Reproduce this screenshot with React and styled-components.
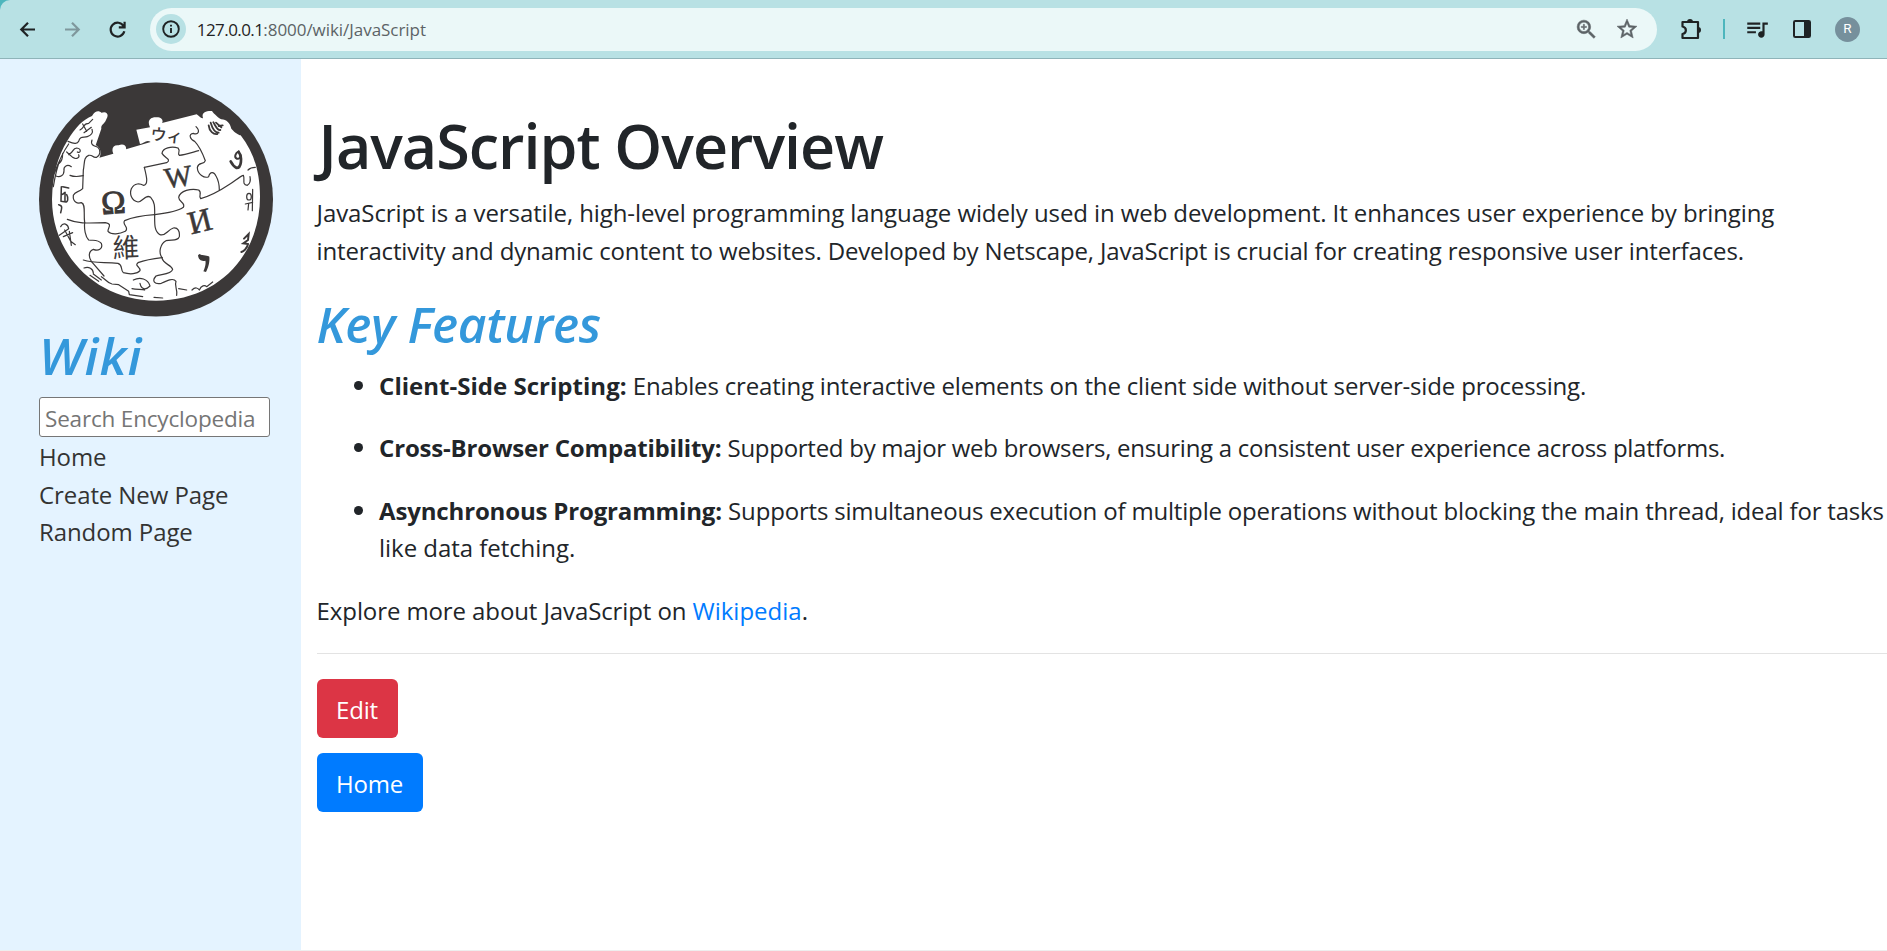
import React from "react";
import styled, { createGlobalStyle } from "styled-components";
import { MdZoomIn, MdStarBorder, MdQueueMusic } from "react-icons/md";

const GlobalStyle = createGlobalStyle`
  *, *::before, *::after { box-sizing: border-box; }
  body {
    margin: 0;
    background: #fff;
    color: #212529;
    font-family: "Open Sans", "Noto Sans", "Liberation Sans", sans-serif;
    font-size: 24px;
    line-height: 37.5px;
    overflow: hidden;
  }
`;

const Page = styled.div`
  display: flex;
  flex-direction: column;
  height: 100vh;
  border-bottom: 1px solid #eeeeee;
`;

/* ---------- browser toolbar ---------- */

const ToolbarFrame = styled.div`
  flex: none;
  background: #4db6bd;
`;

const Toolbar = styled.header`
  display: flex;
  align-items: center;
  height: 59px;
  padding: 0 27px 0 17px;
  background: #b8e1e4;
  border-bottom: 1px solid #8fb4b9;
  border-top-left-radius: 10px;
`;

const NavButtons = styled.div`
  display: flex;
  gap: 24px;
  width: 133px;
`;

const NavIcon = styled.svg`
  display: block;
  width: 21px;
  height: 21px;
  fill: none;
  stroke: ${(p) => (p.$muted ? "#7f979c" : "#1f2324")};
  stroke-width: 2.2;
`;

const AddressBar = styled.div`
  display: flex;
  align-items: center;
  width: 1509px;
  height: 43px;
  padding: 0 18.5px 0 6px;
  border-radius: 22px;
  background: #ebf8f8;
  color: #5c6366;
`;

const SiteInfo = styled.span`
  display: flex;
  align-items: center;
  justify-content: center;
  width: 30px;
  height: 30px;
  margin-right: 11px;
  border-radius: 50%;
  background: #b8e1e4;
`;

const Url = styled.span`
  flex: 1;
  padding-top: 1px;
  font-size: 17px;
  line-height: 24px;
  letter-spacing: -0.05px;
  white-space: nowrap;
`;

const UrlHost = styled.span`
  color: #1f2324;
  letter-spacing: -0.58px;
`;

const AddressActions = styled.span`
  display: flex;
  align-items: center;
  gap: 15.5px;
  path:not([fill="none"]) { stroke: #5c6366; stroke-width: 0.5px; }
`;

const Actions = styled.div`
  display: flex;
  align-items: center;
  margin-left: 22.5px;
`;

const Divider = styled.span`
  width: 2px;
  height: 20px;
  margin: 0 19.5px 0 20px;
  background: #4db6bd;
`;

const PanelIcon = styled.svg`
  display: block;
  margin: 0 24px 0 23px;
`;

const Avatar = styled.span`
  display: flex;
  align-items: center;
  justify-content: center;
  width: 25px;
  height: 25px;
  border-radius: 50%;
  background: #76909c;
  color: #fff;
  font: 13.5px/1 Roboto, sans-serif;
`;

/* ---------- page ---------- */

const Columns = styled.div`
  display: flex;
  flex: 1;
  min-height: 0;
`;

const Sidebar = styled.aside`
  flex: none;
  width: 301px;
  padding: 23px 0 0 39px;
  background: #e4f3ff;
`;

const Logo = styled.svg`
  display: block;
  width: 234px;
  height: 235px;
`;

const Heading = styled.h2`
  margin: 0 0 12.5px;
  color: #3498db;
  font-size: 49.5px;
  font-style: italic;
  font-weight: 600;
  line-height: 60px;
  letter-spacing: ${(p) => p.$tracking || 0}px;
`;

const SidebarHeading = styled(Heading)`
  padding: 8px 0 0 0;
  margin-bottom: 12px;
  font-size: 51px;
`;

const Search = styled.input`
  display: block;
  width: 231px;
  height: 40px;
  padding: 3px 0 0 5px;
  border: 1px solid #767676;
  border-radius: 3px;
  background: #fff;
  font: inherit;
  font-size: 22.5px;
  letter-spacing: -0.18px;
  &::placeholder { color: #757575; opacity: 1; }
`;

const SideNav = styled.nav`
  display: flex;
  flex-direction: column;
  padding-top: 1px;
`;

const SideLink = styled.a`
  color: #333;
  text-decoration: none;
  letter-spacing: -0.09px;
`;

const Content = styled.main`
  flex: 1;
  padding: 48.5px 0 0 15.6px;
`;

const Title = styled.h1`
  margin: 0 0 11.5px;
  padding-left: 2px;
  font-size: 61px;
  font-weight: 600;
  line-height: 75px;
  letter-spacing: -1px;
`;

const Paragraph = styled.p`
  margin: 0 0 ${(p) => (p.$last ? 23.5 : 25)}px;
`;

const FeatureList = styled.ul`
  margin: 0;
  padding: 0 0 0 62.5px;
`;

const Feature = styled.li`
  margin-bottom: 25px;
  &::marker { font-size: 25px; }
`;

const Text = styled.span`
  letter-spacing: ${(p) => p.$tracking}px;
`;

const Strong = styled.strong`
  font-weight: 700;
  letter-spacing: ${(p) => p.$tracking}px;
`;

const Link = styled.a`
  color: #007bff;
  text-decoration: none;
`;

const Rule = styled.hr`
  margin: 0 0 25px;
  border: 0;
  border-top: 1px solid #e3e3e3;
`;

const ButtonStack = styled.div`
  display: flex;
  flex-direction: column;
  align-items: flex-start;
  gap: 15px;
`;

const Button = styled.button`
  height: 59px;
  padding: 12.5px 20px 9px 19.5px;
  border: 0;
  border-radius: 6px;
  background: ${(p) => (p.$danger ? "#dc3545" : "#007bff")};
  color: #fff;
  font: inherit;
  letter-spacing: -0.2px;
`;

function WikiLogo() {
  return (
    <Logo viewBox="27 36 702 705">
      <circle cx="378" cy="388.5" r="351" fill="#3b3838" />
      <path
        fill="#fff"
        d="M208 263 L250 251 C243 236 250 224 266 226 C278 219 291 226 288 238 L362 216 C350 206 340 222 330 222 L319 179 L360 172 C350 152 362 140 380 142 C398 142 400 154 396 159 L500 133 C508 138 514 148 519 144 C514 130 524 122 546 123 C552 132 566 144 574 148 C590 148 600 160 604 176 C616 190 626 194 632 196 C668 242 690 300 690 380 C690 560 560 692 378 692 C200 692 66 556 66 388 C68 310 84 258 112 212 C136 172 160 148 186 138 C196 120 208 122 214 128 C232 122 238 134 228 150 C222 164 212 164 214 176 L197 226 C214 232 214 254 208 263 Z"
      />
      <g fill="none" stroke="#3b3838" strokeWidth="3.6" strokeLinecap="round" strokeLinejoin="round">
        <path d="M114 214 C130 220 142 224 146 214 C150 196 162 204 172 200 C184 196 190 188 186 178" />
        <path d="M186 210 C180 226 194 228 204 232 C214 242 210 256 200 262 C186 264 190 254 176 256 C160 262 164 282 160 300 L158 356 C146 368 136 362 130 376 C128 396 142 402 154 398 C168 402 160 430 164 458" />
        <path d="M78 318 C90 324 102 316 102 302 C100 288 112 282 124 290 M120 316 C132 321 146 320 160 317" />
        <path d="M112 448 C150 464 190 458 226 458 C250 462 232 474 234 484 C244 496 270 492 286 484 C300 472 274 464 284 452 C310 440 344 436 374 434" />
        <path d="M164 458 C162 476 166 500 176 510 C194 512 204 508 214 520 C220 538 204 544 190 538 C174 544 176 562 184 574 L222 618" />
        <path d="M160 570 C190 580 220 576 264 580 C280 586 270 598 280 608 C300 614 322 612 330 602 C332 590 312 588 324 578 C346 570 370 566 396 563" />
        <path d="M396 563 C384 546 392 520 408 512 C426 508 444 514 448 500 C450 484 444 472 430 474 C412 480 406 500 390 494 C372 484 374 460 374 434 C374 414 376 398 362 382 C346 372 340 394 324 396 C304 392 298 372 304 356 C314 338 330 340 340 346 C356 344 350 320 343 292" />
        <path d="M343 292 L410 278 C426 268 404 264 396 250 C398 234 424 228 444 234 C454 246 440 248 448 256 C466 254 490 246 506 242" />
        <path d="M498 170 C512 184 504 196 490 190 C474 192 480 208 494 214 C506 226 520 256 526 272 C522 286 506 274 502 292 C502 314 524 326 536 320 C540 304 552 304 558 318 C566 332 568 344 568 360" />
        <path d="M374 434 C410 430 444 424 460 412 C468 398 446 396 446 382 C450 362 484 354 506 360 C518 370 504 376 512 386 C540 378 570 362 600 342 C614 334 628 320 640 316 C646 328 634 344 652 346 C662 340 662 330 660 320" />
        <path d="M654 300 C660 294 668 292 676 292" />
        <path d="M396 563 C398 582 424 584 428 598 C424 614 390 612 378 618 C364 634 374 644 394 640 C410 632 430 622 438 634 C432 648 444 660 440 676 M446 656 L470 660" />
        <path d="M214 620 C228 628 232 640 246 642 L266 644 L296 664 L298 674 L338 680 M372 682 L398 684" />
        <path d="M162 594 C176 588 190 596 190 610 M180 616 L206 634 M190 612 L214 630" />
        <path d="M310 630 C330 620 354 626 360 648 C346 662 334 658 330 640 M306 656 C320 660 336 656 344 660" />
        <path d="M486 660 C496 650 504 654 508 660 C514 646 524 644 530 650 L548 636" />
        <path d="M150 180 C164 174 158 160 176 160 L188 148 M162 188 L184 172 M158 162 L170 184" />
        <path d="M110 246 L128 262 M116 254 C134 244 126 236 140 234 C156 236 152 252 142 246 M128 262 C140 270 150 262 146 254" />
        <path d="M72 312 C84 280 96 250 116 222 M88 280 C96 274 98 262 98 250 M70 350 C74 326 78 300 90 270" />
        <path strokeWidth="4.6" d="M94 350 L93 394 M94 374 C110 370 104 352 105 396 C114 398 116 384 110 374 M93 394 L108 396 M98 350 L116 354 M86 404 C98 406 96 414 92 428" />
        <path d="M92 470 C100 456 114 462 116 476 L88 496 M100 500 L128 488 M104 480 L122 514 L136 524 M118 484 L124 526" />
        <ellipse cx="657" cy="380" rx="7" ry="10" />
        <path d="M646 402 L668 397 M656 400 L654 420 M668 358 L667 422" />
      </g>
      <g fill="none" stroke="#3b3838" strokeLinecap="round">
        <path strokeWidth="6" d="M626 244 C616 248 612 262 620 266 C628 268 632 262 632 256" />
        <path strokeWidth="8" d="M626 246 C638 262 634 294 620 294 C612 290 606 282 602 274" />
        <path strokeWidth="5.5" d="M536 166 C538 184 550 194 562 192 M542 158 C548 178 556 188 566 188 M550 157 C558 170 562 182 571 180 M558 158 L574 172 M566 168 L578 166" />
        <path strokeWidth="6" d="M642 506 L656 492 L654 510 L640 520 L654 522 C652 536 640 544 634 546" />
      </g>
      <path fill="#3b3838" d="M504 556 L508 552 C520 558 534 556 538 560 C540 576 534 594 528 606 L520 604 C526 592 528 578 526 572 C516 574 506 572 504 556 Z" />
      <g fill="#3b3838" stroke="#3b3838" strokeWidth="1.5" fontFamily="'Liberation Serif', serif" textAnchor="middle">
        <text x="250" y="430" fontSize="98" strokeWidth="3" transform="rotate(-4 250 400)">Ω</text>
        <text x="444" y="350" fontSize="88" transform="rotate(-8 444 320)">W</text>
        <text x="510" y="486" fontSize="98" transform="rotate(-14 510 455)">И</text>
      </g>
      <g fill="#3b3838" fontFamily="'Noto Sans CJK TC', sans-serif" textAnchor="middle">
        <text x="288" y="562" fontSize="80" transform="rotate(-2 288 534)">維</text>
        <text x="410" y="214" fontSize="48" fontWeight="500" transform="rotate(6 412 196)" fontFamily="'Noto Sans CJK JP', sans-serif">ウィ</text>
      </g>
    </Logo>
  );
}

export default function App() {
  return (
    <Page>
      <GlobalStyle />
      <ToolbarFrame>
        <Toolbar>
          <NavButtons>
            <NavIcon viewBox="0 0 21 21"><path d="M18 10.5H4.5M11 3.8L4.3 10.5L11 17.2" /></NavIcon>
            <NavIcon viewBox="0 0 21 21" $muted><path d="M3 10.5H16.5M10 3.8L16.7 10.5L10 17.2" /></NavIcon>
            <NavIcon viewBox="0 0 21 21">
              <path d="M16.6 7.2A6.9 6.9 0 1 0 17.3 12.2M17.6 2.8V8.3H11.8" />
            </NavIcon>
          </NavButtons>
          <AddressBar>
            <SiteInfo>
              <svg width="18" height="18" viewBox="0 0 18 18">
                <circle cx="9" cy="9" r="7.8" fill="none" stroke="#1f2324" strokeWidth="1.9" />
                <path d="M9 8V13M9 4.7V6.6" stroke="#1f2324" strokeWidth="1.9" />
              </svg>
            </SiteInfo>
            <Url><UrlHost>127.0.0.1</UrlHost>:8000/wiki/JavaScript</Url>
            <AddressActions>
              <MdZoomIn size={25} color="#5c6366" />
              <MdStarBorder size={24} color="#5c6366" />
            </AddressActions>
          </AddressBar>
          <Actions>
            <svg width="23" height="23" viewBox="0 0 23 23">
              <path d="M2.5 4H18V20H2.5V16C7 15 7 9.500 2.500 8.500Z" fill="none" stroke="#1f2324" strokeWidth="2.2" strokeLinejoin="round" />
              <path d="M7 4A3 3 0 0 1 13 4ZM18 9A3 3 0 0 1 18 15Z" fill="#1f2324" />
            </svg>
            <Divider />
            <MdQueueMusic size={26} color="#1f2324" />
            <PanelIcon width="18" height="18" viewBox="0 0 18 18">
              <rect x="1" y="1" width="16" height="16" rx="1.3" fill="none" stroke="#1f2324" strokeWidth="2" />
              <path d="M11 1H17V17H11Z" fill="#1f2324" />
            </PanelIcon>
            <Avatar>R</Avatar>
          </Actions>
        </Toolbar>
      </ToolbarFrame>
      <Columns>
        <Sidebar>
          <WikiLogo />
          <SidebarHeading $tracking={1}>Wiki</SidebarHeading>
          <Search placeholder="Search Encyclopedia" />
          <SideNav>
            <SideLink>Home</SideLink>
            <SideLink>Create New Page</SideLink>
            <SideLink>Random Page</SideLink>
          </SideNav>
        </Sidebar>
        <Content>
          <Title>JavaScript Overview</Title>
          <Paragraph>
            <Text $tracking={-0.09}>
              JavaScript is a versatile, high-level programming language widely used in web development. It enhances user experience by bringing{" "}
            </Text>
            <Text $tracking={-0.155}>
              interactivity and dynamic content to websites. Developed by Netscape, JavaScript is crucial for creating responsive user interfaces.
            </Text>
          </Paragraph>
          <Heading $tracking={-0.35}>Key Features</Heading>
          <FeatureList>
            <Feature>
              <Strong $tracking={0.02}>Client-Side Scripting:</Strong>{" "}
              <Text $tracking={-0.175}>Enables creating interactive elements on the client side without server-side processing.</Text>
            </Feature>
            <Feature>
              <Strong $tracking={-0.19}>Cross-Browser Compatibility:</Strong>{" "}
              <Text $tracking={-0.275}>Supported by major web browsers, ensuring a consistent user experience across platforms.</Text>
            </Feature>
            <Feature>
              <Strong $tracking={-0.16}>Asynchronous Programming:</Strong>{" "}
              <Text $tracking={-0.18}>Supports simultaneous execution of multiple operations without blocking the main thread, ideal for tasks </Text>
              <Text $tracking={-0.05}>like data fetching.</Text>
            </Feature>
          </FeatureList>
          <Paragraph $last>
            <Text $tracking={-0.1}>Explore more about JavaScript on </Text>
            <Link>Wikipedia</Link>.
          </Paragraph>
          <Rule />
          <ButtonStack>
            <Button $danger>Edit</Button>
            <Button>Home</Button>
          </ButtonStack>
        </Content>
      </Columns>
    </Page>
  );
}
